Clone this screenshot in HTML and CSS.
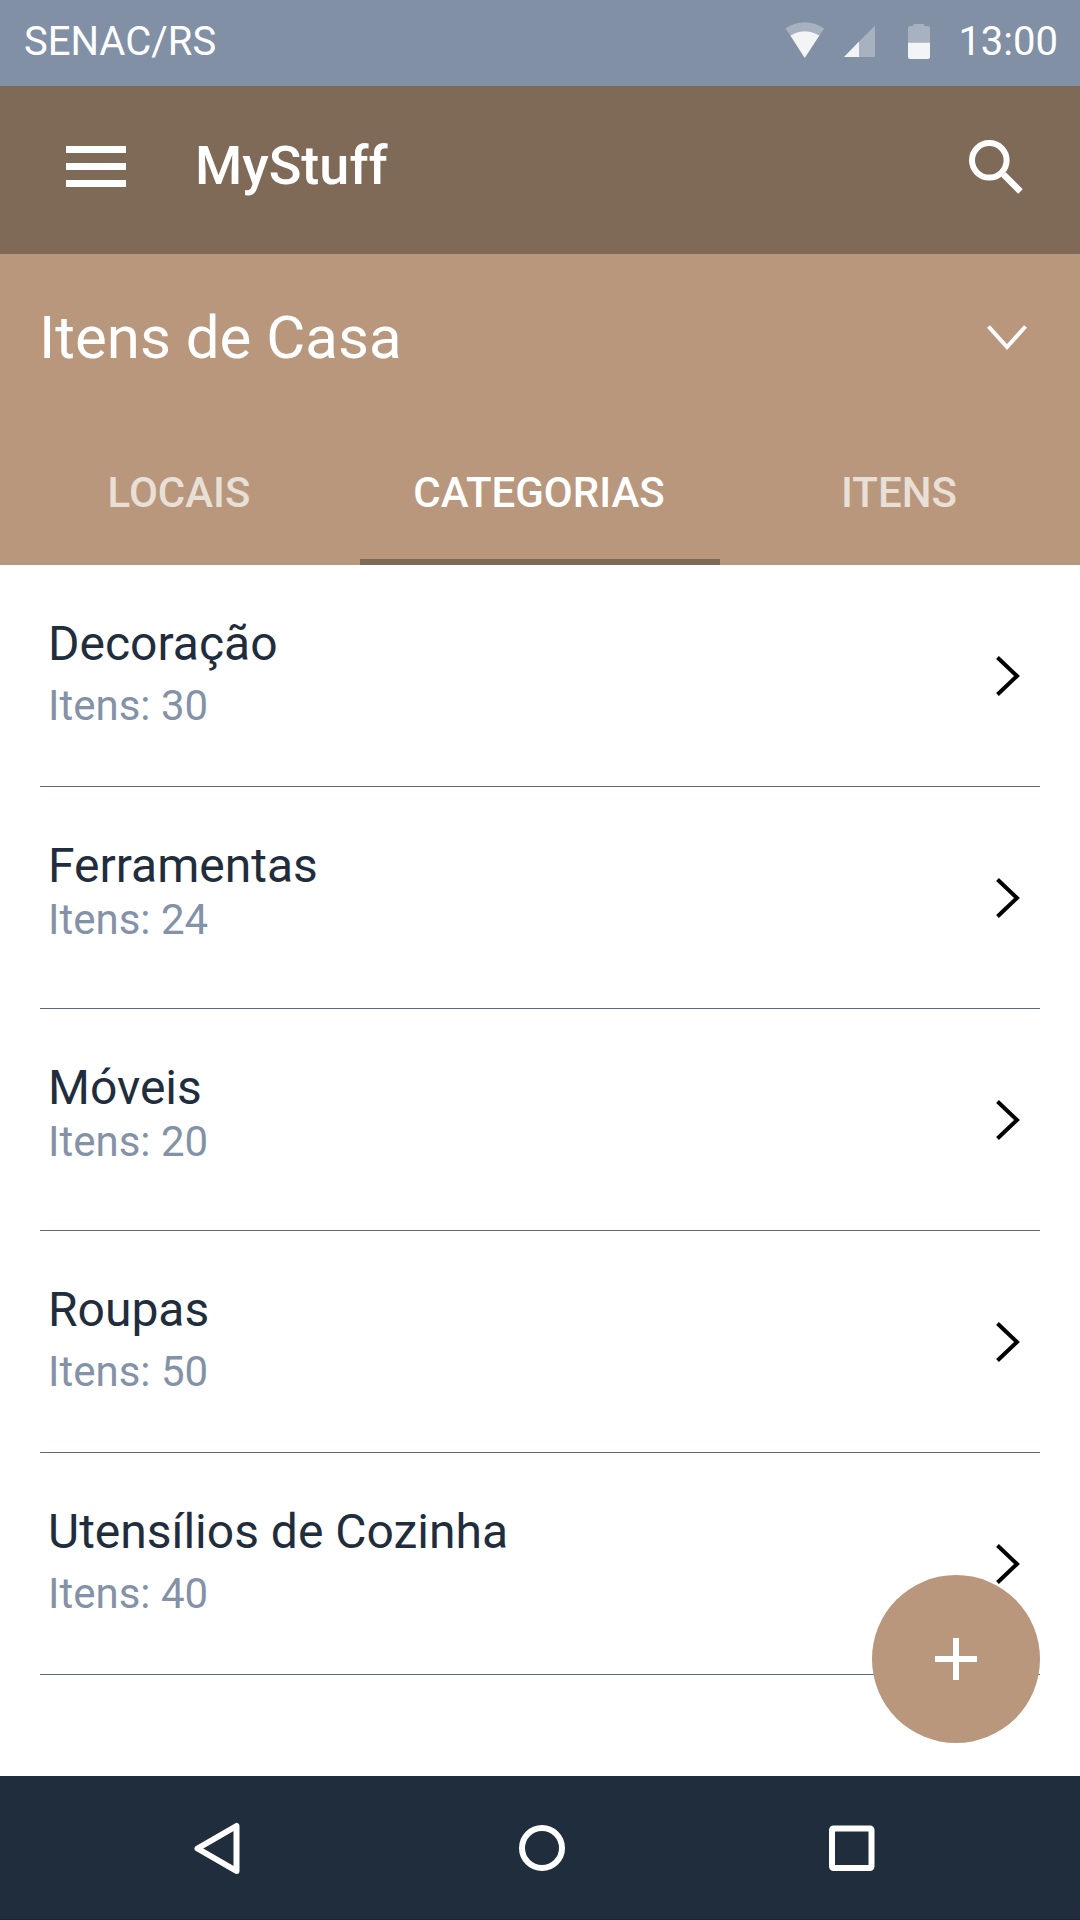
FILE: index.html
```html
<!DOCTYPE html>
<html lang="pt-BR">
<head>
<meta charset="utf-8">
<title>MyStuff</title>
<link rel="stylesheet" href="styles.css">
</head>
<body>
<div class="screen">
  <div class="status">
    <span class="carrier">SENAC/RS</span>
    <svg class="status-icons" width="146" height="40" viewBox="785 20 146 40">
      <g fill="#fff" fill-opacity=".3">
        <path d="M785.3 28.5Q804.700 16 824.300 28.500L819.400 35.500Q804.700 27 790.300 35.500Z"/>
        <path d="M859 41.500L875 25.500V57H859Z"/>
        <path d="M908 43V28q0-2 2-2h3.300v-1q0-1 1-1h9q1 0 1 1v1h3.700q2 0 2 2v15z"/>
      </g>
      <g fill="#fff" fill-opacity=".9">
        <path d="M790.300 35.500Q804.700 27 819.400 35.500L804.700 58Z"/>
        <path d="M844 57L859 41.500V57Z"/>
        <path d="M908 42.700h22v14.300q0 2-2 2h-18q-2 0-2-2z"/>
      </g>
    </svg>
    <span class="clock">13:00</span>
  </div>

  <header class="appbar">
    <svg width="60" height="41" viewBox="0 0 60 41" fill="#fff"><path d="M0 0h60v7H0zM0 17h60v7H0zM0 34h60v7H0z"/></svg>
    <h1 class="brand">MyStuff</h1>
    <svg class="search" width="54" height="54" viewBox="0 0 54 54" fill="none" stroke="#fff"><circle cx="20.300" cy="20.300" r="17.300" stroke-width="6"/><path d="M34.500 34.500L51.500 51.500" stroke-width="6.400"/></svg>
  </header>

  <section class="group">
    <div class="picker">
      <h2 class="group-name">Itens de Casa</h2>
      <svg width="40" height="26" viewBox="0 0 40 26" fill="none" stroke="#fff" stroke-width="4"><path d="M1.500 1.500L20 22L38.500 1.500"/></svg>
    </div>
    <nav class="tabs">
      <span class="tab">LOCAIS</span>
      <span class="tab active">CATEGORIAS</span>
      <span class="tab">ITENS</span>
    </nav>
  </section>

  <main class="list">
    <div class="row"><div><div class="name">Decoração</div><div class="count">Itens: 30</div></div>
      <svg class="go" viewBox="0 0 24 40"><path d="M1.500 1.500L21 20L1.500 38.500"/></svg></div>
    <div class="row tight"><div><div class="name">Ferramentas</div><div class="count">Itens: 24</div></div>
      <svg class="go" viewBox="0 0 24 40"><path d="M1.500 1.500L21 20L1.500 38.500"/></svg></div>
    <div class="row tight"><div><div class="name">Móveis</div><div class="count">Itens: 20</div></div>
      <svg class="go" viewBox="0 0 24 40"><path d="M1.500 1.500L21 20L1.500 38.500"/></svg></div>
    <div class="row"><div><div class="name">Roupas</div><div class="count">Itens: 50</div></div>
      <svg class="go" viewBox="0 0 24 40"><path d="M1.500 1.500L21 20L1.500 38.500"/></svg></div>
    <div class="row"><div><div class="name">Utensílios de Cozinha</div><div class="count">Itens: 40</div></div>
      <svg class="go" viewBox="0 0 24 40"><path d="M1.500 1.500L21 20L1.500 38.500"/></svg></div>
    <div class="fab"><svg width="42" height="42" viewBox="0 0 42 42" fill="#fff"><path d="M18 0h6v18h18v6H24v18h-6V24H0v-6h18z"/></svg></div>
  </main>

  <footer class="navbar">
    <svg width="46" height="52" viewBox="0 0 46 52"><path d="M3.500 26.500L42.500 4V49Z"/></svg>
    <svg class="home" width="46" height="46" viewBox="0 0 46 46"><circle cx="23" cy="23" r="20"/></svg>
    <svg width="46" height="46" viewBox="0 0 46 46"><rect x="3" y="3.500" width="39.500" height="39.500" rx="1.500"/></svg>
  </footer>
</div>
</body>
</html>
```
FILE: styles.css
```css
* { box-sizing: border-box; }
body { margin: 0; background: #fff; font-family: Roboto, sans-serif; }
h1, h2 { margin: 0; }
svg { display: block; flex: none; }

.screen { width: 1080px; height: 1920px; display: flex; flex-direction: column; overflow: hidden; }

.status { height: 86px; display: flex; align-items: flex-start; padding: 20px 22px 0 24px; background: #8190a5; color: #fff; font-size: 40px; line-height: 44px; }
.status-icons { margin-left: auto; margin-right: 27px; }

.appbar { height: 168px; display: flex; align-items: flex-start; padding: 60px 57px 0 66px; background: #7f6a58; }
.brand { margin: -18px auto 0 69px; color: #fff; font-size: 54px; font-weight: 500; line-height: 76px; }
.search { margin-top: -6px; }

.group { height: 311px; display: flex; flex-direction: column; justify-content: space-between; background: #b9977d; color: #fff; }
.picker { display: flex; align-items: center; justify-content: space-between; height: 168px; padding: 0 53px 0 39px; }
.group-name { font-size: 60px; font-weight: 400; line-height: 70px; }
.tabs { display: grid; grid-template-columns: repeat(3, 1fr); height: 143px; }
.tab { padding: 46px 2px 0 0; font-size: 42px; font-weight: 500; line-height: 50px; text-align: center; color: #e8dfd6; }
.tab.active { color: #fff; border-bottom: 6px solid #7f6a58; }

.list { flex: 1; position: relative; padding: 0 40px; }
.row { height: 222px; display: flex; justify-content: space-between; align-items: flex-start; padding: 51px 20px 0 8px; border-bottom: 1px solid #5b6b7c; }
.name { font-size: 48px; line-height: 56px; color: #1f2d3d; }
.count { margin-top: 9px; font-size: 42px; line-height: 50px; color: #8492a8; }
.tight .count { margin-top: 1px; }
.go { width: 24px; height: 40px; margin-top: 40px; fill: none; stroke: #000; stroke-width: 4; }
.fab { position: absolute; right: 40px; bottom: 33px; width: 168px; height: 168px; border-radius: 50%; display: grid; place-items: center; background: #b9977d; }

.navbar { height: 144px; display: flex; align-items: center; justify-content: space-between; padding: 0 205px 0 194px; background: #1f2d3d; border-bottom: 1px solid #1b2239; }
.navbar svg { fill: none; stroke: #fff; stroke-width: 6; stroke-linejoin: round; }
.navbar .home { margin-left: 15px; }
```
